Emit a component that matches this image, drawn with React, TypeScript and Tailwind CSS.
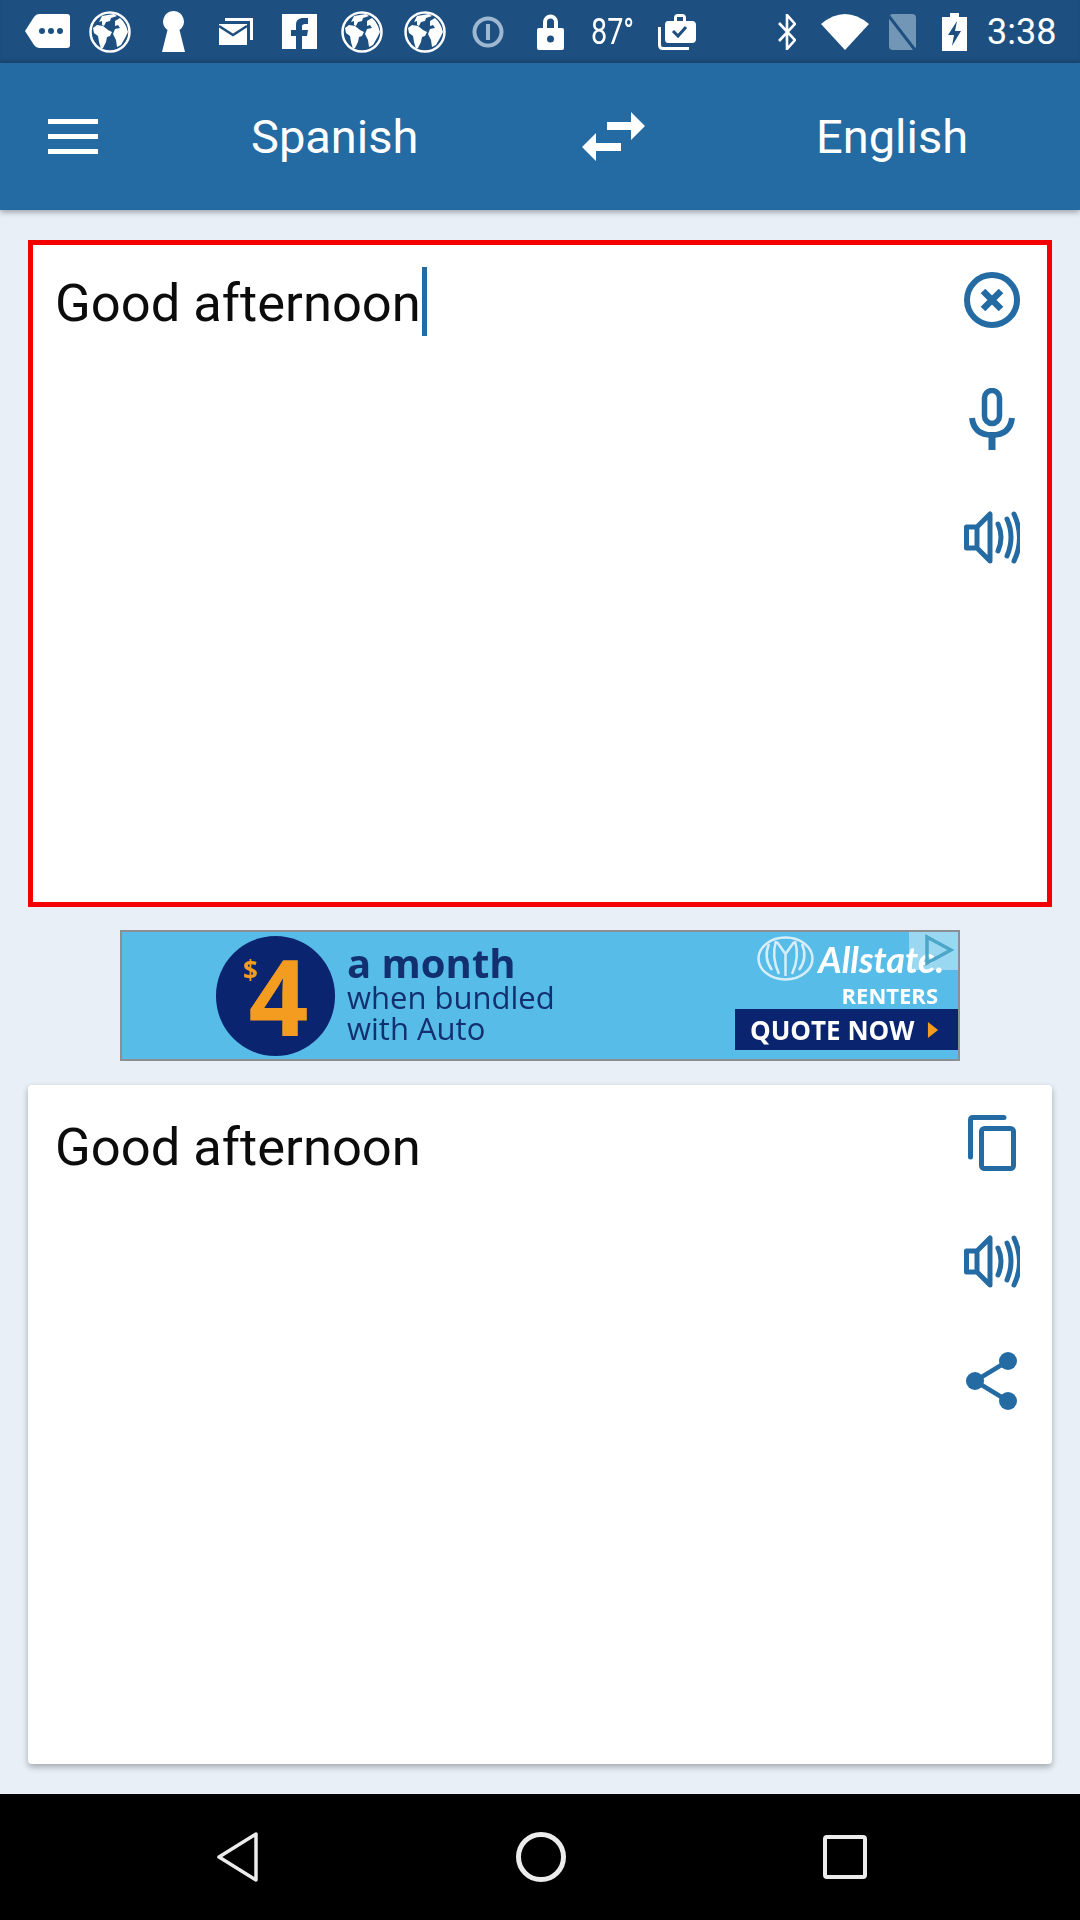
import React from "react";

const BLUE = "#246ba3";
const BAR = "#1d5080";

function Globe({ className = "" }: { className?: string }) {
  return (
    <svg viewBox="0 0 42 42" className={`w-[42px] h-[42px] ${className}`}>
      <circle cx="21" cy="21" r="19.5" fill={BAR} stroke="#fff" strokeWidth="2.5" />
      <path
        d="M13 5l12-2 3 2-6 2-1 3-4 1-2 4-2-1v-4l-3 1zM4 17l4-3 6 1 5 4 4 2-2 4-3 1-1 5-3 6-2 1-2-7-1-6-4-3zM26 10l5-3 3 3 3 5 2 6-3 6-4 7-4 2-1-7-3-6 2-5 5-1-2-3-3 1z"
        fill="#fff"
      />
    </svg>
  );
}

function StatusBar() {
  return (
    <div className="h-[63px] shrink-0 bg-[#1d5080] flex items-center text-white pl-[25px] shadow-[inset_0_-3px_3px_rgba(0,0,0,0.08)]">
      <svg viewBox="0 0 45 34" className="w-[45px] h-[34px] -mt-[1px]" fill="#fff">
        <path d="M0 17 9 3Q11 0 14 0H42Q45 0 45 3V31Q45 34 42 34H14Q11 34 9 31Z" />
        <circle cx="17" cy="17" r="3" fill={BAR} />
        <circle cx="26" cy="17" r="3" fill={BAR} />
        <circle cx="35" cy="17" r="3" fill={BAR} />
      </svg>
      <Globe className="ml-[19px]" />
      <svg viewBox="0 0 23 41" className="w-[23px] h-[41px] ml-[31px]" fill="#fff">
        <path d="M11.500 0a10.500 10.500 0 0 1 6 19l5.500 22H0l5.500-22a10.500 10.500 0 0 1 6-19z" />
      </svg>
      <svg viewBox="0 0 34 27" className="w-[34px] h-[27px] ml-[34px]" fill="#fff">
        <path d="M6 0h28v22h-3V3H6z" />
        <path d="M0 6h28v21H0z" />
        <path d="M0 8l14 9 14-9" fill="none" stroke={BAR} strokeWidth="2.500" />
      </svg>
      <svg viewBox="0 0 35 35" className="w-[35px] h-[35px] ml-[29px]">
        <path d="M0 0h35v35H0z" fill="#fff" />
        <path d="M14 35V22H9v-6h5v-5c0-5 3-7 7-7h5v6h-3c-2 0-3 1-3 2v4h6l-1 6h-5v13z" fill={BAR} />
      </svg>
      <Globe className="ml-[24px]" />
      <Globe className="ml-[21px]" />
      <svg viewBox="0 0 32 32" className="w-[32px] h-[32px] ml-[26px]">
        <circle cx="16" cy="16" r="13.500" fill="none" stroke="#9db8d0" strokeWidth="4" />
        <path d="M14 8h4v16h-4z" fill="#9db8d0" />
      </svg>
      <svg viewBox="0 0 27 37" className="w-[27px] h-[37px] ml-[33px]" fill="#fff">
        <path d="M6 16V9a7.500 7.500 0 0 1 15 0v7h-4V9a3.500 3.500 0 0 0-7 0v7z" />
        <path d="M2 15h23q2 0 2 2v18q0 2-2 2H2q-2 0-2-2V17q0-2 2-2z" />
        <circle cx="13.500" cy="26" r="3.500" fill={BAR} />
      </svg>
      <span className="ml-[27px] w-[43px] text-[36px] leading-none font-['Roboto',sans-serif] whitespace-nowrap scale-x-[0.8] origin-left">
        87°
      </span>
      <svg viewBox="0 0 38 36" className="w-[38px] h-[36px] ml-[24px]" fill="#fff">
        <path d="M10 7h6V4q0-4 4-4h4q4 0 4 4v3h6q4 0 4 4v14q0 4-4 4H10q-3 0-3-4V11q0-4 3-4zM19 7h6V3h-6z" fillRule="evenodd" />
        <path d="M0 13h3v18q0 2 2 2h26v3H5q-5 0-5-5z" />
        <path d="M15 17l5 5 8-9" fill="none" stroke={BAR} strokeWidth="3" />
      </svg>
      <svg viewBox="0 0 18 36" className="w-[18px] h-[36px] ml-[82px]">
        <path d="M1 9l16 17-8 9V1l8 9L1 27" fill="none" stroke="#fff" strokeWidth="2.600" />
      </svg>
      <svg viewBox="0 0 48 36" className="w-[48px] h-[36px] ml-[25px]" fill="#fff">
        <path d="M0 10Q24-10 48 10L24 36z" />
      </svg>
      <svg viewBox="0 0 27 36" className="w-[27px] h-[36px] ml-[20px]">
        <path d="M4 0h19q4 0 4 4v28q0 4-4 4H4q-4 0-4-4V4q0-4 4-4z" fill="#7296b5" />
        <path d="M-1 1l27 35" stroke={BAR} strokeWidth="3" />
      </svg>
      <svg viewBox="0 0 25 38" className="w-[25px] h-[38px] ml-[26px]">
        <path d="M8 0h9v4h8v34H0V4h8z" fill="#fff" />
        <path d="M15 8 6 22h6l-2 11 9-15h-6z" fill={BAR} />
      </svg>
      <span className="ml-[20px] text-[36px] leading-none font-['Roboto',sans-serif]">3:38</span>
    </div>
  );
}

function Toolbar() {
  return (
    <div className="h-[147px] shrink-0 bg-[#246ba3] flex items-center text-white text-[47px] font-['Roboto',sans-serif] shadow-[0_2px_6px_rgba(0,0,0,0.35)] relative">
      <div className="ml-[48px] -mt-[1px] w-[50px] h-[35px] flex flex-col justify-between">
        <div className="h-[5px] bg-white" />
        <div className="h-[5px] bg-white" />
        <div className="h-[5px] bg-white" />
      </div>
      <span className="ml-[153px] w-[331px] leading-none">Spanish</span>
      <svg viewBox="0 0 64 49" className="w-[64px] h-[49px]" fill="#fff">
        <path d="M25 10h24V0l14 14-14 14V18H25zM0 35l14-14v10h25v8H14v10z" />
      </svg>
      <span className="ml-[170px] leading-none">English</span>
    </div>
  );
}

function IconCol({ className = "", children }: { className?: string; children: React.ReactNode }) {
  return <div className={`w-[64px] flex flex-col items-center shrink-0 ${className}`}>{children}</div>;
}

function IconCell({ children }: { children: React.ReactNode }) {
  return <div className="h-[119px] flex items-center justify-center">{children}</div>;
}

function Speaker() {
  return (
    <svg viewBox="0 0 56 54" className="w-[56px] h-[54px]" fill="none" stroke={BLUE} strokeWidth="5" strokeLinejoin="round" strokeLinecap="round">
      <path d="M2.500 16h10.500v21H2.500zM13 16 26 3v47L13 37" />
      <path d="M34 13q6 13 0 27M43 8q8 18 0 37M50 3q11 24 0 47" />
    </svg>
  );
}

function ClearIcon() {
  return (
    <svg viewBox="0 0 56 56" className="w-[56px] h-[56px]" fill="none" stroke={BLUE}>
      <circle cx="28" cy="28" r="25" strokeWidth="6" />
      <path d="M19 19l18 18M37 19 19 37" strokeWidth="6.500" />
    </svg>
  );
}

function MicIcon() {
  return (
    <svg viewBox="0 0 46 62" className="w-[46px] h-[62px]" fill="none" stroke={BLUE}>
      <rect x="15.500" y="2.500" width="15" height="33" rx="7.500" strokeWidth="5.500" />
      <path d="M3 30q2 17 20 17t20-17" strokeWidth="6" />
      <path d="M23 48v14" strokeWidth="7" />
    </svg>
  );
}

function CopyIcon() {
  return (
    <svg viewBox="0 0 48 56" className="w-[48px] h-[56px]" fill="none" stroke={BLUE} strokeWidth="5">
      <path d="M36 2.500H5q-2.500 0-2.500 2.500V42" strokeLinecap="round" />
      <rect x="13.500" y="13.500" width="32" height="40" rx="3" />
    </svg>
  );
}

function ShareIcon() {
  return (
    <svg viewBox="0 0 52 58" className="w-[52px] h-[58px]" fill={BLUE}>
      <circle cx="42" cy="9" r="9" />
      <circle cx="9" cy="29" r="9" />
      <circle cx="42" cy="49" r="9" />
      <path d="M42 9 9 29l33 20" fill="none" stroke={BLUE} strokeWidth="4.500" />
    </svg>
  );
}

function AdBanner() {
  return (
    <div className="mt-[23px] mx-[120px] h-[131px] shrink-0 border-[2px] border-[#8a8f94] bg-[#57bde8] relative flex items-center overflow-hidden font-['Open_Sans',sans-serif]">
      <div className="ml-[94px] w-[119px] h-[120px] rounded-full bg-[#0b2470] relative flex items-center justify-center text-[#f39c1f] font-bold blur-[0.4px]">
        <span className="absolute left-[27px] top-[21px] text-[26px] leading-none">$</span>
        <span className="text-[105px] leading-none ml-[6px]">4</span>
      </div>
      <div className="ml-[12px] -mt-[3px] flex flex-col text-[#12306f] leading-[31px] blur-[0.5px]">
        <span className="text-[40px] font-bold leading-[38px]">a month</span>
        <span className="text-[31px]">when bundled</span>
        <span className="text-[31px]">with Auto</span>
      </div>
      <div className="ml-auto w-[223px] h-full flex flex-col items-end blur-[0.5px] text-white font-bold">
        <div className="flex items-center h-[47px] mt-[3px] mr-[14px] font-['Lato',sans-serif]">
          <svg viewBox="0 0 57 45" className="w-[57px] h-[45px]" fill="none" stroke="#d7eef9" strokeWidth="2.500">
            <ellipse cx="28.500" cy="22.500" rx="27" ry="21" />
            <path d="M12 8q-6 14 3 26M19 5q-5 16 3 33M38 5q5 16-3 33M45 8q6 14-3 26M20 6l8.500 12L37 6M28.500 18v22" />
          </svg>
          <span className="ml-[4px] text-[36px] font-bold italic leading-none">Allstate.</span>
        </div>
        <span className="text-[22px] leading-none mr-[20px] mt-[2px]">RENTERS</span>
        <div className="mt-auto mb-[9px] w-[223px] h-[41px] bg-[#0b2470] flex items-center text-[26px] pl-[15px] whitespace-nowrap leading-none">
          QUOTE NOW
          <svg viewBox="0 0 14 22" className="w-[14px] h-[16px] ml-[12px]" fill="#f39c1f">
            <path d="M0 0l14 11L0 22z" />
          </svg>
        </div>
      </div>
      <div className="absolute -top-[2px] right-0 w-[49px] h-[40px] bg-white/40 flex items-center justify-center">
        <svg viewBox="0 0 30 32" className="w-[30px] h-[32px] ml-[10px] blur-[0.4px]" fill="none" stroke="#4ba6c8" strokeWidth="3.500">
          <path d="M3 3l24 13L3 29z" />
        </svg>
      </div>
    </div>
  );
}

export default function App() {
  return (
    <div className="w-[1080px] h-[1920px] bg-[#e8eff7] flex flex-col overflow-hidden font-['Roboto',sans-serif]">
      <StatusBar />
      <Toolbar />

      <div className="mt-[30px] mx-[28px] h-[667px] shrink-0 border-[5px] border-[#f50000] bg-white flex pl-[22px] pr-[23px]">
        <div className="flex-1 pt-[22px] flex items-start text-[52.5px] leading-[72px] text-[#0c0c0c]">
          <span>Good afternoon</span>
          <span className="w-[5px] h-[69px] bg-[#246ba3] ml-[1px]" />
        </div>
        <IconCol className="-mt-[5px]">
          <IconCell><ClearIcon /></IconCell>
          <IconCell><MicIcon /></IconCell>
          <IconCell><Speaker /></IconCell>
        </IconCol>
      </div>

      <AdBanner />

      <div className="mt-[24px] mx-[28px] h-[679px] shrink-0 bg-white rounded-[4px] shadow-[0_3px_6px_rgba(0,0,0,0.3)] flex pl-[27px] pr-[28px]">
        <div className="flex-1 pt-[27px] text-[52.5px] leading-[70px] text-[#0c0c0c]">Good afternoon</div>
        <IconCol className="-mt-[2px]">
          <IconCell><CopyIcon /></IconCell>
          <IconCell><Speaker /></IconCell>
          <IconCell><ShareIcon /></IconCell>
        </IconCol>
      </div>

      <div className="mt-auto h-[126px] shrink-0 bg-black flex items-center">
        <svg viewBox="0 0 42 50" className="w-[42px] h-[50px] ml-[216px] -mt-[1px]" fill="none" stroke="#ececec" strokeWidth="3.500" strokeLinejoin="round">
          <path d="M40 2v46L3 25z" />
        </svg>
        <svg viewBox="0 0 50 50" className="w-[50px] h-[50px] ml-[258px] -mt-[1px]" fill="none" stroke="#ececec" strokeWidth="5">
          <circle cx="25" cy="25" r="22.500" />
        </svg>
        <svg viewBox="0 0 44 44" className="w-[44px] h-[44px] ml-[257px] -mt-[1px]" fill="none" stroke="#ececec" strokeWidth="4">
          <rect x="2" y="2" width="40" height="40" rx="2" />
        </svg>
      </div>
    </div>
  );
}
